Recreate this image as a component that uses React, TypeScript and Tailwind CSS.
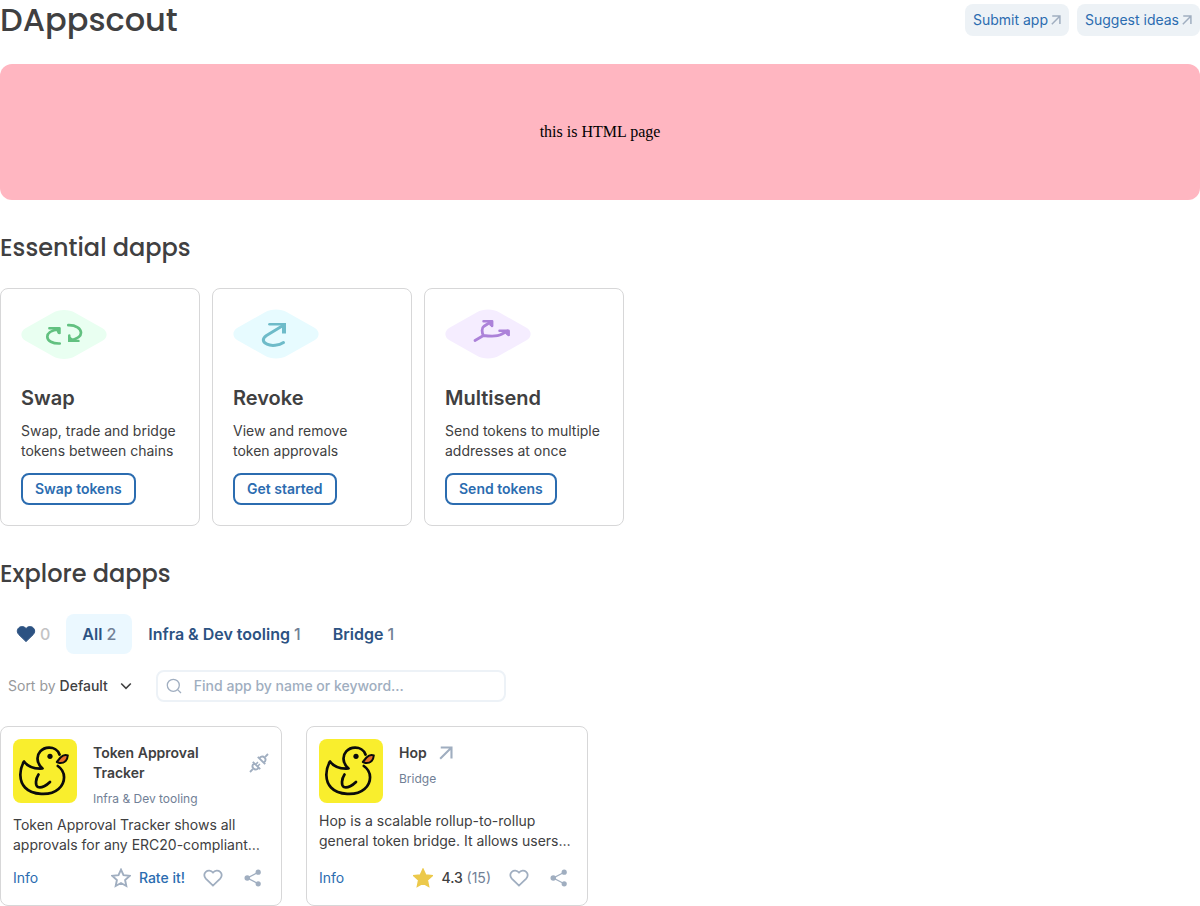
import React from 'react';

function ArrowIcon({ className }: { className: string }) {
  return (
    <svg viewBox="0 0 12 12" className={className} fill="none" stroke="currentColor" strokeWidth="1.800" aria-hidden="true">
      <path d="M1.500 1.300H10.700V10.800M10.500 1.500L1 11" />
    </svg>
  );
}

function HeaderLink({ children }: { children: React.ReactNode }) {
  return (
    <a href="#" className="flex h-8 items-center gap-[3px] rounded-lg bg-[#edf2f6] px-2 text-sm text-[#2b6cb0]">
      {children}
      <ArrowIcon className="size-2.5 text-[#a0aec0]" />
    </a>
  );
}

const diamond =
  'M32 3.2C38 -.3 48 -.3 54 3.2L81.500 18.700C87 22 87 28 81.500 31.300L54 46.800C48 50.300 38 50.300 32 46.800L4.500 31.300C-1 28 -1 22 4.500 18.700Z';

function SwapArt() {
  return (
    <svg viewBox="0 0 86 52" className="h-[52px] w-[86px]" aria-hidden="true">
      <path d={diamond} transform="translate(0 .5)" fill="#e9fff1" />
      <g fill="none" stroke="#62c180" strokeLinecap="round" strokeLinejoin="round">
        <path d="M28.300 19.200H38.300V24" strokeWidth="2.400" />
        <path d="M37.500 20.500C29.500 21.500 26.300 24.500 26.300 27.800C26.300 32 31.500 34.700 38.700 34.500" strokeWidth="2.700" />
        <path d="M47.300 16.200C55 16 60 19.500 60 23.700C60 27.500 56 30 49 31.500" strokeWidth="2.700" />
        <path d="M48.300 26.500V31.900H57.500" strokeWidth="2.400" />
      </g>
      <path d="M33 18.500H39.500V25L37 25L35.500 22ZM47.100 26V33H54L51.500 29.500Z" fill="#62c180" />
    </svg>
  );
}

function RevokeArt() {
  return (
    <svg viewBox="0 0 86 52" className="h-[52px] w-[86px]" aria-hidden="true">
      <path d={diamond} fill="#e7fbff" />
      <g fill="none" stroke="#6ebbc9" strokeLinejoin="round">
        <path d="M36.500 15.300H51" strokeWidth="2.600" strokeLinecap="round" />
        <path d="M51 14V24.500" strokeWidth="4" />
        <path d="M50 16.500L33.500 26.500C28.500 30 30 33.500 34 35.200C38.500 37.300 46 36.500 50.500 33.500" strokeWidth="3" strokeLinecap="round" />
      </g>
    </svg>
  );
}

function MultisendArt() {
  return (
    <svg viewBox="0 0 86 52" className="h-[52px] w-[86px]" aria-hidden="true">
      <path d={diamond} fill="#f5edff" />
      <g fill="none" stroke="#ac82d9" strokeWidth="2.800" strokeLinecap="round" strokeLinejoin="round">
        <path d="M30 31.500L38.500 26.500M38.500 26.500C36.800 24 36.300 19 39 17.200L46 12.800M38.500 26.500C45 27.300 53 27.300 56.500 25.300L62.500 22" />
        <path d="M38.500 12.300H47V17M54.500 21.800H63.500V26" strokeWidth="2.500" />
      </g>
      <path d="M42 11.500H48.200V17.500L45 17ZM58 21.500H64.700V27L61.500 26Z" fill="#ac82d9" />
    </svg>
  );
}

const essentials = [
  { art: <SwapArt />, title: 'Swap', text: 'Swap, trade and bridge\ntokens between chains', action: 'Swap tokens' },
  { art: <RevokeArt />, title: 'Revoke', text: 'View and remove\ntoken approvals', action: 'Get started' },
  { art: <MultisendArt />, title: 'Multisend', text: 'Send tokens to multiple\naddresses at once', action: 'Send tokens' },
];

function DuckLogo() {
  return (
    <svg viewBox="0 0 64 64" className="size-16 shrink-0 rounded-lg bg-[#f9ee2d]" aria-hidden="true">
      <path d="M47.500 18.500C50 16 52 15 54.800 16.500C54.500 20 52.500 24.500 46.500 24L43.800 23Z" fill="#e8702a" stroke="#0b0b0b" strokeWidth="2" strokeLinejoin="round" />
      <g fill="none" stroke="#0b0b0b" strokeWidth="2.700" strokeLinecap="round" strokeLinejoin="round">
        <path d="M46.500 15.500C45 11 40.500 8.600 36 8.700C28.500 8.900 24 14.500 24.600 20.500C24.900 24 26.500 27 29.500 29.500C22 30 15 28 11 22.500C6 31 6 42 12 48.500C19 56 37 57.500 45.500 50C53 43.500 53 32.500 44.800 27" />
        <path d="M25.500 35.500C22.500 40 22 46.500 25 48C28.500 49.500 34 46 37 43" />
      </g>
      <circle cx="37" cy="17.300" r="2.600" fill="#0b0b0b" />
    </svg>
  );
}

function PlugIcon() {
  return (
    <svg viewBox="0 0 20 20" className="size-5 shrink-0 text-[#a0aec0]" fill="none" stroke="currentColor" strokeWidth="1.900" role="img" aria-label="Integrated app">
      <path d="M1 19l2.800-2.800M16.200 3.800L19 1" />
      <path d="M3.800 8.800l7.400 7.400M5.300 10.300l-1.300 1.300a3.200 3.200 0 0 0 4.400 4.400l1.300-1.300" />
      <path d="M8.800 3.800l7.400 7.400M10.300 5.300l1.300-1.300a3.200 3.200 0 0 1 4.400 4.400l-1.300 1.300" />
      <path d="M6.800 11.300l2.200-2.200M8.700 13.200l2.200-2.200" strokeWidth="1.500" />
    </svg>
  );
}

const heartPath =
  'M10 17.600L2.800 10.600C.8 8.500 .8 5.600 2.800 3.800C4.800 2 8 2.100 10 4.500C12 2.100 15.200 2 17.200 3.800C19.200 5.600 19.200 8.500 17.200 10.600Z';
const starPath = 'M10 1.700L12.500 7.200L18.600 7.900L14.100 12L15.300 18L10 15L4.700 18L5.900 12L1.400 7.900L7.500 7.200Z';

type DApp = {
  name: string;
  category: string;
  text: string;
  external?: boolean;
  rating?: string;
  votes?: number;
};

const dapps: DApp[] = [
  {
    name: 'Token Approval Tracker',
    category: 'Infra & Dev tooling',
    text: 'Token Approval Tracker shows all approvals for any ERC20-compliant…',
  },
  {
    name: 'Hop',
    category: 'Bridge',
    text: 'Hop is a scalable rollup-to-rollup general token bridge. It allows users…',
    external: true,
    rating: '4.3',
    votes: 15,
  },
];

function DAppCard({ app }: { app: DApp }) {
  return (
    <article className="flex flex-col rounded-lg border border-[#d7d7d8] p-3">
      <div className="flex gap-4">
        <DuckLogo />
        <div className="min-w-0 grow pt-1">
          <div className="flex items-center justify-between gap-2">
            <h3 className="flex items-center gap-3 text-sm leading-5 font-semibold">
              {app.name}
              {app.external && <ArrowIcon className="size-3.5 text-[#a0aec0]" />}
            </h3>
            {!app.external && <PlugIcon />}
          </div>
          <p className="mt-2 text-xs leading-4 text-[#718096]">{app.category}</p>
        </div>
      </div>
      <p className="mt-2 text-sm leading-5">{app.text}</p>
      <div className="mt-auto flex h-[38px] items-center pt-2 text-sm text-[#a0aec0]">
        <a href="#" className="mr-auto text-[#2b6cb0]">Info</a>
        <button type="button" className="mr-3 flex items-center gap-2 font-medium">
          <svg viewBox="0 0 20 20" className={app.rating ? 'size-5 fill-[#ecc94b] stroke-[#ecc94b]' : 'size-5 fill-none stroke-[#a0aec0]'} strokeWidth="1.900" aria-hidden="true">
            <path d={starPath} />
          </svg>
          {app.rating ? (
            <span className="text-[#404041]">
              {app.rating} <span className="font-normal text-[#718096]">({app.votes})</span>
            </span>
          ) : (
            <span className="text-[#2b6cb0]">Rate it!</span>
          )}
        </button>
        <button type="button" aria-label="Add to favorites" className="mr-2 flex size-8 items-center justify-center">
          <svg viewBox="0 0 20 20" className="size-5" fill="none" stroke="currentColor" strokeWidth="1.800">
            <path d={heartPath} />
          </svg>
        </button>
        <button type="button" aria-label="Share" className="flex size-8 items-center justify-center">
          <svg viewBox="0 0 20 20" className="size-5" fill="currentColor">
            <path d="M15.300 4.200L4.300 10L15.300 15.800" fill="none" stroke="currentColor" strokeWidth="1.300" />
            <circle cx="15.200" cy="4.200" r="2.600" />
            <circle cx="4.300" cy="10" r="2.800" />
            <circle cx="15.200" cy="15.800" r="2.600" />
          </svg>
        </button>
      </div>
    </article>
  );
}

const tabs = [
  { name: 'All', count: 2 },
  { name: 'Infra & Dev tooling', count: 1 },
  { name: 'Bridge', count: 1 },
];

const headingFont = "font-[Poppins,Inter,sans-serif]";

export default function App() {
  return (
    <main className="bg-white font-[Inter,sans-serif] text-[#404041]">
      <header className="flex items-center justify-between">
        <h1 className={`${headingFont} text-[32px] leading-10 font-medium`}>DAppscout</h1>
        <nav className="flex gap-2">
          <HeaderLink>Submit app</HeaderLink>
          <HeaderLink>Suggest ideas</HeaderLink>
        </nav>
      </header>

      <div className="mt-6 flex h-[136px] items-center justify-center rounded-xl bg-[#ffb6c1] font-['Liberation_Serif',serif] text-base text-black">
        this is HTML page
      </div>

      <section>
        <h2 className={`${headingFont} mt-8 text-2xl leading-8 font-medium`}>Essential dapps</h2>
        <div className="mt-6 flex flex-wrap gap-3">
          {essentials.map((item) => (
            <article key={item.title} className="flex w-[200px] flex-col items-start rounded-lg border border-[#d7d7d8] p-5">
              {item.art}
              <h3 className="mt-6 text-xl leading-[26px] font-semibold">{item.title}</h3>
              <p className="mt-2.5 text-sm leading-5 whitespace-pre-line">{item.text}</p>
              <button type="button" className="mt-3 h-8 rounded-lg border-2 border-[#2b6cb0] px-3 text-sm font-semibold text-[#2b6cb0]">
                {item.action}
              </button>
            </article>
          ))}
        </div>
      </section>

      <section>
        <h2 className={`${headingFont} mt-8 text-2xl leading-8 font-medium`}>Explore dapps</h2>
        <div role="tablist" className="mt-6 flex text-base font-semibold text-[#2c5282]">
          <button type="button" role="tab" aria-selected="false" aria-label="Favorites 0" className="flex h-10 items-center gap-1 px-4">
            <svg viewBox="0 0 20 20" className="size-5" fill="currentColor" stroke="currentColor" aria-hidden="true">
              <path d={heartPath} />
            </svg>
            <span className="font-medium text-[#c3c3c4]">0</span>
          </button>
          {tabs.map((tab, i) => (
            <button key={tab.name} type="button" role="tab" aria-selected={i === 0} className={i === 0 ? 'h-10 rounded-lg bg-[#ebf8ff] px-4' : 'h-10 px-4'}>
              {tab.name} <span className="font-medium text-[#718096]">{tab.count}</span>
            </button>
          ))}
        </div>

        <div className="mt-4 flex gap-4">
          <div className="flex h-8 items-center gap-1 px-2 text-sm">
            <label htmlFor="sort" className="text-[#97999b]">Sort by</label>
            <div className="relative flex items-center">
              <select id="sort" className="field-sizing-content appearance-none bg-transparent pr-6 font-medium">
                <option>Default</option>
              </select>
              <svg viewBox="0 0 12 12" className="pointer-events-none absolute right-0 size-3" fill="none" stroke="currentColor" strokeWidth="1.600" aria-hidden="true">
                <path d="M1.200 3.500L6 8.300L10.800 3.500" />
              </svg>
            </div>
          </div>
          <label className="flex h-8 w-[350px] items-center gap-3 rounded-lg border-2 border-[#edf2f7] px-2">
            <svg viewBox="0 0 16 16" className="size-4 shrink-0 text-[#a0aec0]" fill="none" stroke="currentColor" strokeWidth="1.300" aria-hidden="true">
              <circle cx="7.300" cy="7.300" r="6" />
              <path d="M11.600 11.600L15 15" />
            </svg>
            <input type="text" aria-label="Search apps" placeholder="Find app by name or keyword..." className="w-full bg-transparent text-sm font-medium outline-none placeholder:text-[#a0aec0]" />
          </label>
        </div>

        <div className="mt-6 grid grid-cols-[repeat(auto-fill,minmax(260px,1fr))] gap-6">
          {dapps.map((app) => (
            <DAppCard key={app.name} app={app} />
          ))}
        </div>
      </section>
    </main>
  );
}
